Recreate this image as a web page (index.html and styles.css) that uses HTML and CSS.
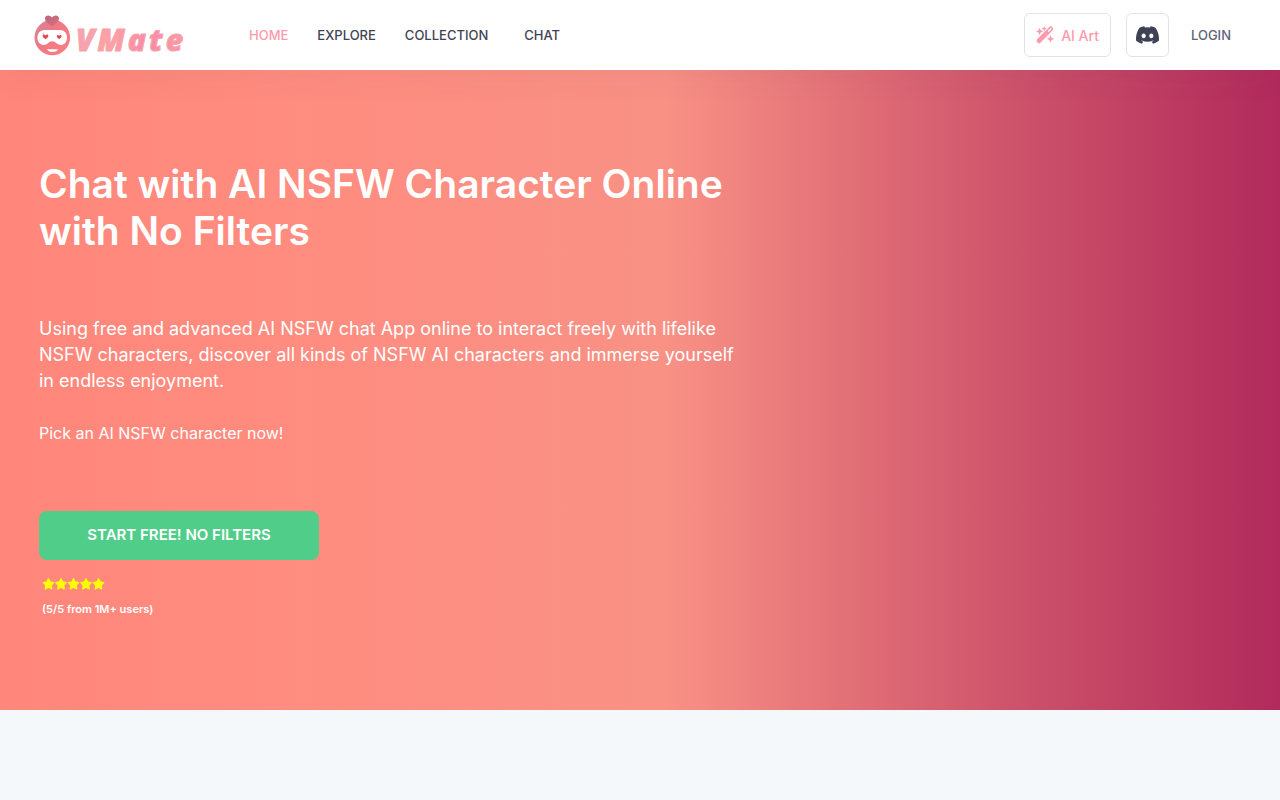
FILE: index.html
```html
<!DOCTYPE html>
<html lang="en">
<head>
<meta charset="utf-8">
<meta name="viewport" content="width=device-width, initial-scale=1">
<title>VMate</title>
<link rel="stylesheet" href="styles.css">
</head>
<body>
<header class="header">
  <a class="brand" href="#" aria-label="VMate">
    <svg class="brand-logo" viewBox="0 0 152 42" role="img" aria-hidden="true">
      <defs>
        <linearGradient id="face" x1="0" y1="0" x2="1" y2="1">
          <stop offset="0" stop-color="#d9829c"/><stop offset=".45" stop-color="#f07882"/><stop offset="1" stop-color="#fa8084"/>
        </linearGradient>
        <linearGradient id="heart" x1="0" y1="0" x2="1" y2="1">
          <stop offset="0" stop-color="#b9657d"/><stop offset="1" stop-color="#dc7080"/>
        </linearGradient>
        <linearGradient id="word" x1="0" y1="0" x2="1" y2="0">
          <stop offset="0" stop-color="#f5a3b3"/><stop offset=".3" stop-color="#ffa0a2"/><stop offset=".65" stop-color="#f98ba8"/><stop offset="1" stop-color="#fb9ba4"/>
        </linearGradient>
      </defs>
      <circle cx="19.300" cy="23.500" r="17.800" fill="url(#face)"/>
      <path d="M19 12.500C15.500 9.500 12 7.500 12 4.400C12 .8 16.900.3 19 3.600C21.100.3 26 .8 26 4.400C26 7.500 22.500 9.500 19 12.500Z" fill="url(#heart)"/>
      <path d="M11.500 16H27C36.500 16 36 31 28 31C23.500 31 23 27.300 19.300 27.300C15.500 27.300 15 31 10.800 31C2.500 31 2 16 11.500 16Z" fill="#fff"/>
      <path d="M12.500 25.200C10.700 23.800 9.600 23 9.600 21.800C9.600 20.300 11.700 20 12.500 21.500C13.300 20 15.400 20.300 15.400 21.800C15.400 23 14.300 23.800 12.500 25.200Z" fill="#dc4b55"/>
      <path d="M26.200 25.200C24.600 23.900 23.800 23.100 23.800 22.200C23.800 20.800 25.500 20.600 26.200 21.800C26.900 20.600 28.600 20.800 28.600 22.200C28.600 23.100 27.800 23.900 26.200 25.200Z" fill="#dc4b55"/>
      <path d="M9.500 20L11 18.500M26.500 19.800L27.700 18.600" stroke="#f3a9ad"/>
      <path d="M14 35.300H25C24.500 38.700 14.500 38.700 14 35.300Z" fill="#fff"/>
      <text class="brand-word" x="43" y="37" fill="url(#word)">VMate</text>
    </svg>
  </a>
  <nav class="nav" aria-label="Main">
    <a class="nav-link nav-link-active" href="#">HOME</a>
    <a class="nav-link" href="#">EXPLORE</a>
    <a class="nav-link" href="#">COLLECTION</a>
    <a class="nav-link nav-link-chat" href="#">CHAT</a>
  </nav>
  <div class="actions">
    <a class="tool tool-art" href="#">
      <svg class="wand" viewBox="0 0 18 18" aria-hidden="true">
        <path d="M3 14.800L14.800 2.900" stroke="currentColor" stroke-width="4.800" stroke-linecap="round"/>
        <path d="M12.400 5.300L14.900 2.800" stroke="#fff" stroke-width="1.400" stroke-linecap="round"/>
        <path d="M3.600 1.700L4.700 4.300L7.300 5.400L4.700 6.500L3.600 9.100L2.500 6.500L-.1 5.400L2.500 4.300ZM8.200 0L9 1.900L10.900 2.700L9 3.500L8.200 5.400L7.400 3.500L5.500 2.700L7.400 1.900ZM14.500 9.200L15.600 11.800L18.200 12.900L15.600 14L14.500 16.600L13.400 14L10.800 12.900L13.400 11.800Z" fill="currentColor"/>
      </svg>
      <span>AI Art</span>
    </a>
    <a class="tool tool-discord" href="#" aria-label="Discord">
      <svg class="discord" viewBox="0 3 24 18" aria-hidden="true"><path fill="currentColor" d="M20.317 4.369A19.800 19.800 0 0 0 15.432 2.855a.07.07 0 0 0-.079.037c-.211.375-.445.865-.608 1.250a18.300 18.300 0 0 0-5.487 0 12.600 12.600 0 0 0-.618-1.250.08.08 0 0 0-.079-.037A19.700 19.700 0 0 0 3.677 4.370a.07.07 0 0 0-.032.027C.533 9.046-.320 13.580.099 18.058a.08.08 0 0 0 .031.056 19.900 19.900 0 0 0 5.993 3.030.08.08 0 0 0 .084-.028c.462-.630.873-1.295 1.226-1.994a.08.08 0 0 0-.042-.106 13.100 13.100 0 0 1-1.872-.892.08.08 0 0 1-.008-.128c.126-.094.252-.192.372-.291a.07.07 0 0 1 .078-.011c3.927 1.793 8.180 1.793 12.061 0a.07.07 0 0 1 .079.009c.120.099.246.198.373.292a.08.08 0 0 1-.006.128 12.300 12.300 0 0 1-1.873.891.08.08 0 0 0-.041.107c.360.698.772 1.363 1.225 1.993a.08.08 0 0 0 .084.029 19.800 19.800 0 0 0 6.002-3.030.08.08 0 0 0 .032-.055c.500-5.177-.838-9.674-3.549-13.660a.06.06 0 0 0-.031-.029ZM8.020 15.331c-1.182 0-2.157-1.086-2.157-2.419 0-1.333.956-2.419 2.157-2.419 1.211 0 2.176 1.095 2.157 2.419 0 1.333-.956 2.419-2.157 2.419Zm7.975 0c-1.183 0-2.157-1.086-2.157-2.419 0-1.333.955-2.419 2.157-2.419 1.210 0 2.176 1.095 2.157 2.419 0 1.333-.946 2.419-2.157 2.419Z"/></svg>
    </a>
    <a class="login" href="#">LOGIN</a>
  </div>
</header>
<main>
  <section class="hero">
    <div class="hero-content">
      <h1 class="hero-title">Chat with AI NSFW Character Online with No Filters</h1>
      <p class="hero-text">Using free and advanced AI NSFW chat App online to interact freely with lifelike NSFW characters, discover all kinds of NSFW AI characters and immerse yourself in endless enjoyment.</p>
      <p class="hero-pick">Pick an AI NSFW character now!</p>
      <button class="cta" type="button">START FREE! NO FILTERS</button>
      <div class="rating">
        <svg class="stars" viewBox="0 0 62 12" role="img" aria-label="5 out of 5 stars">
          <defs><path id="star" d="M6 .8L7.600 4L11.200 4.600L8.600 7.200L9.200 10.900L6 9.200L2.800 10.900L3.400 7.200L.8 4.600L4.400 4Z" fill="#ff0" stroke="#ff0" stroke-width="1.400" stroke-linejoin="round"/></defs>
          <use href="#star" x=".5"/><use href="#star" x="13"/><use href="#star" x="25.500"/><use href="#star" x="38"/><use href="#star" x="50.500"/>
        </svg>
        <span class="rating-text">(5/5 from 1M+ users)</span>
      </div>
    </div>
  </section>
</main>
</body>
</html>
```
FILE: styles.css
```css
* {
  box-sizing: border-box;
}

body {
  margin: 0;
  min-height: 100vh;
  background: #f4f8fb;
  color: #3f4254;
  font-family: Inter, "Liberation Sans", sans-serif;
}

a {
  color: inherit;
  text-decoration: none;
}

.header {
  position: relative;
  display: flex;
  align-items: center;
  height: 70px;
  padding: 0 39px 0 33px;
  background: #fff;
  box-shadow: 0 10px 30px rgba(82, 63, 105, 0.05);
  font-size: 13px;
}

.brand {
  display: flex;
}

.brand-logo {
  width: 152px;
  height: 42px;
  overflow: visible;
}

.brand-word {
  font: italic 800 30px "Open Sans", sans-serif;
  letter-spacing: 3px;
  stroke: #f3a5aa;
  stroke-width: 1px;
}

.nav {
  display: flex;
  gap: 29px;
  margin-left: 64px;
  font-weight: 500;
}

.nav-link-active {
  color: #ff9aac;
}

.nav-link-chat {
  margin-left: 7px;
}

.actions {
  display: flex;
  align-items: center;
  margin-left: auto;
  font-weight: 500;
}

.tool {
  display: flex;
  align-items: center;
  justify-content: center;
  height: 44px;
  border: 1px solid #e1e3ec;
  border-radius: 6px;
}

.tool-art {
  gap: 7px;
  padding: 0 11px;
  color: #ff9aac;
  font-size: 14px;
}

.wand {
  width: 18px;
  height: 18px;
  fill: none;
  overflow: visible;
}

.tool-discord {
  width: 43px;
  margin-left: 15px;
}

.discord {
  width: 23px;
  height: 18px;
}

.login {
  padding: 10px;
  margin-left: 12px;
  color: #5e6278;
}

.hero {
  min-height: 640px;
  padding: 90px 39px;
  background: linear-gradient(to right, #ff867a 0%, #ff8c7f 21%, #f99185 52%, #cf556c 78%, #b12a5b 100%);
  color: #fff;
}

.hero-content {
  max-width: 700px;
}

.hero-title {
  margin: 0;
  font-size: 39px;
  font-weight: 600;
  line-height: 47px;
}

.hero-text {
  margin: 62px 0 0;
  font-size: 18px;
  line-height: 26px;
}

.hero-pick {
  margin: 27px 0 0;
  font-size: 16px;
  line-height: 24px;
}

.cta {
  display: block;
  width: 280px;
  height: 49px;
  margin-top: 66px;
  padding: 0 0 2px;
  border: 0;
  border-radius: 8px;
  background: #50cd89;
  color: #fff;
  font: 600 15px Inter, sans-serif;
}

.rating {
  display: flex;
  flex-direction: column;
  align-items: flex-start;
  gap: 12px;
  padding: 18px 3px 0;
}

.stars {
  width: 62px;
  height: 12px;
  overflow: visible;
}

.rating-text {
  font-size: 11px;
  font-weight: 600;
  line-height: 14px;
}
```
